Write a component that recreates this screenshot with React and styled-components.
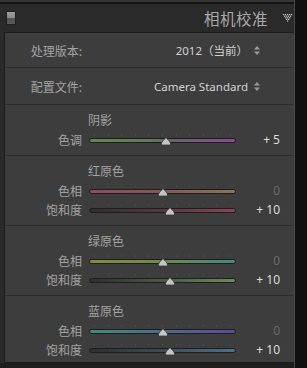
import React from 'react';
import styled, {createGlobalStyle} from 'styled-components';

const GlobalStyle = createGlobalStyle`
    html, body {
        margin: 0;
        padding: 0;
        background: #121212;
    }
    body {
        font-family: "Noto Sans", "Noto Sans CJK SC", sans-serif;
    }
`;

const sections = [
    {
        title: '阴影',
        rows: [
            {label: '色调', value: 5, track: 'linear-gradient(90deg, #5d8a4e 0%, #66735f 45%, #6d5f70 60%, #8c4b92 100%)'},
        ],
    },
    {
        title: '红原色',
        rows: [
            {label: '色相', value: 0, track: 'linear-gradient(90deg, #8e4b5e 0%, #85565a 50%, #8a7456 100%)'},
            {label: '饱和度', value: 10, track: 'linear-gradient(90deg, #2e2e2e 0%, #55393d 50%, #8e4352 100%)'},
        ],
    },
    {
        title: '绿原色',
        rows: [
            {label: '色相', value: 0, track: 'linear-gradient(90deg, #838b3c 0%, #6f8a4a 50%, #3f8a7e 100%)'},
            {label: '饱和度', value: 10, track: 'linear-gradient(90deg, #2e2e2e 0%, #4a5a45 50%, #6a8c5a 100%)'},
        ],
    },
    {
        title: '蓝原色',
        rows: [
            {label: '色相', value: 0, track: 'linear-gradient(90deg, #3f8a7e 0%, #4a6e86 50%, #5a4c9a 100%)'},
            {label: '饱和度', value: 10, track: 'linear-gradient(90deg, #2e2e2e 0%, #3e4c58 50%, #4d7088 100%)'},
        ],
    },
];

const formatValue = (v) => {
    if(v > 0) {
        return `+ ${v}`;
    } else if(v < 0) {
        return `- ${Math.abs(v)}`;
    }
    return '0';
};

const Spinner = () => (
    <svg width="6" height="9" viewBox="0 0 6 9">
        <path d="M3 0 L6 3.5 L0 3.5 Z" fill="#9a9a9a" />
        <path d="M0 5.5 L6 5.5 L3 9 Z" fill="#9a9a9a" />
    </svg>
);

const CollapseIcon = () => {
    const dots = [];
    const rows = [[0, 2, 4, 6, 8], [1, 3, 5, 7], [2, 4, 6], [3, 5], [4]];
    rows.forEach((xs, y) => xs.forEach(x => dots.push(<rect key={`${x}-${y}`} x={x} y={y * 1.6} width="1.2" height="1.2" fill="#c8c8c8" />)));
    return <svg width="10" height="8" viewBox="0 0 10 8">{dots}</svg>;
};

const Thumb = () => (
    <svg width="10" height="9" viewBox="0 0 10 9">
        <path d="M5 0.5 C6 2 9.5 4.5 9.5 6.5 L9.5 8.5 L0.5 8.5 L0.5 6.5 C0.5 4.5 4 2 5 0.5 Z" fill="#c4c4c4" stroke="#2a2a2a" strokeWidth="0.8" />
        <path d="M1 7 L9 7 L9 8 L1 8 Z" fill="#8e8e8e" />
    </svg>
);

const Slider = ({row}) => {
    const pct = 50 + row.value / 2;
    return (
        <SliderRow>
            <RowLabel>{row.label}</RowLabel>
            <TrackWrap>
                <Ticks />
                <Track $bg={row.track} />
                <ThumbHolder style={{left: `${pct}%`}}>
                    <Thumb />
                </ThumbHolder>
            </TrackWrap>
            <Value $zero={row.value === 0}>{formatValue(row.value)}</Value>
        </SliderRow>
    );
};

const App = () => {
    return (
        <Page>
            <GlobalStyle />
            <Main>
                <TopStrip />
                <Header>
                    <Toggle />
                    <Title>相机校准</Title>
                    <CollapseIcon />
                </Header>
                <Panel>
                    <SelectRow $h={35}>
                        <RowLabel>处理版本:</RowLabel>
                        <SelectValue>2012（当前）</SelectValue>
                        <Spinner />
                    </SelectRow>
                    <SelectRow $h={37}>
                        <RowLabel>配置文件:</RowLabel>
                        <SelectValue>Camera Standard</SelectValue>
                        <Spinner />
                    </SelectRow>
                    {sections.map((s, i) => (
                        <Section key={s.title} $last={i === sections.length - 1}>
                            <SectionTitle>{s.title}</SectionTitle>
                            {s.rows.map(r => <Slider key={r.label} row={r} />)}
                        </Section>
                    ))}
                </Panel>
            </Main>
            <Gutter />
        </Page>
    );
};

const Page = styled.div`
    display: flex;
    width: 307px;
    height: 368px;
    overflow: hidden;
    background: #121212;
`;

const Main = styled.div`
    width: 294px;
    display: flex;
    flex-direction: column;
    background: #1e1e1e;
    border-right: 1px solid #4a4a4a;
`;

const Gutter = styled.div`
    flex: 1;
    background: #101010;
`;

const TopStrip = styled.div`
    height: 2px;
    background: #353535;
    border-bottom: 2px solid #141414;
`;

const Header = styled.div`
    height: 28px;
    display: flex;
    align-items: center;
    padding: 0 1px 0 6px;
    background: #2a2a2a;
`;

const Toggle = styled.div`
    width: 8px;
    height: 12px;
    border: 1px solid #1e1e1e;
    background: linear-gradient(180deg, #9c9c9c 0%, #8a8a8a 50%, #4e4e4e 55%, #5a5a5a 100%);
    border-radius: 1px;
`;

const Title = styled.div`
    margin-left: auto;
    margin-right: 15px;
    font-family: "Noto Sans CJK SC", sans-serif;
    font-size: 15.5px;
    letter-spacing: 0.5px;
    color: #a9a9a9;
`;

const Panel = styled.div`
    margin: 0 0 0 4px;
    background: #3d3d3d;
    border: 1px solid #1c1c1c;
    border-right: none;
    display: flex;
    flex-direction: column;
    box-shadow: -4px 0 0 #2a2a2a;
`;

const SelectRow = styled.div`
    box-sizing: border-box;
    height: ${p => p.$h}px;
    display: flex;
    align-items: center;
    padding-right: 34px;
    border-bottom: 1px solid #2c2c2c;
`;

const RowLabel = styled.div`
    width: 77px;
    flex-shrink: 0;
    text-align: right;
    font-family: "Noto Sans CJK SC", sans-serif;
    font-size: 12px;
    color: #a3a3a3;
`;

const SelectValue = styled.div`
    flex: 1;
    text-align: right;
    margin-right: 6px;
    font-family: "Noto Sans", "Noto Sans CJK SC", sans-serif;
    font-size: 11.5px;
    color: #d2d2d2;
`;

const Section = styled.div`
    display: flex;
    flex-direction: column;
    padding: 5px 0 ${p => p.$last ? '3px' : '6px'};
    border-bottom: ${p => p.$last ? 'none' : '1px solid #2c2c2c'};
`;

const SectionTitle = styled.div`
    height: 20px;
    line-height: 20px;
    padding-left: 83px;
    font-family: "Noto Sans CJK SC", sans-serif;
    font-size: 12px;
    color: #a3a3a3;
`;

const SliderRow = styled.div`
    height: 19px;
    display: flex;
    align-items: center;
`;

const TrackWrap = styled.div`
    position: relative;
    width: 147px;
    height: 12px;
    margin-left: 7px;
    display: flex;
    align-items: center;
`;

const Ticks = styled.div`
    position: absolute;
    left: 5px;
    right: 5px;
    top: 0;
    height: 2px;
    background: repeating-linear-gradient(90deg, #4a4a4a 0 1px, transparent 1px 13.6px);
`;

const Track = styled.div`
    width: 100%;
    height: 3px;
    margin-top: 2px;
    border: 1px solid #1e1e1e;
    border-radius: 3px;
    background: ${p => p.$bg};
`;

const ThumbHolder = styled.div`
    position: absolute;
    top: 3px;
    width: 10px;
    height: 9px;
    margin-left: -5px;
    display: flex;
`;

const Value = styled.div`
    width: 44px;
    text-align: right;
    font-family: "Noto Sans", sans-serif;
    font-size: 12px;
    color: ${p => p.$zero ? '#6a6a6a' : '#dedede'};
`;

export default App;
